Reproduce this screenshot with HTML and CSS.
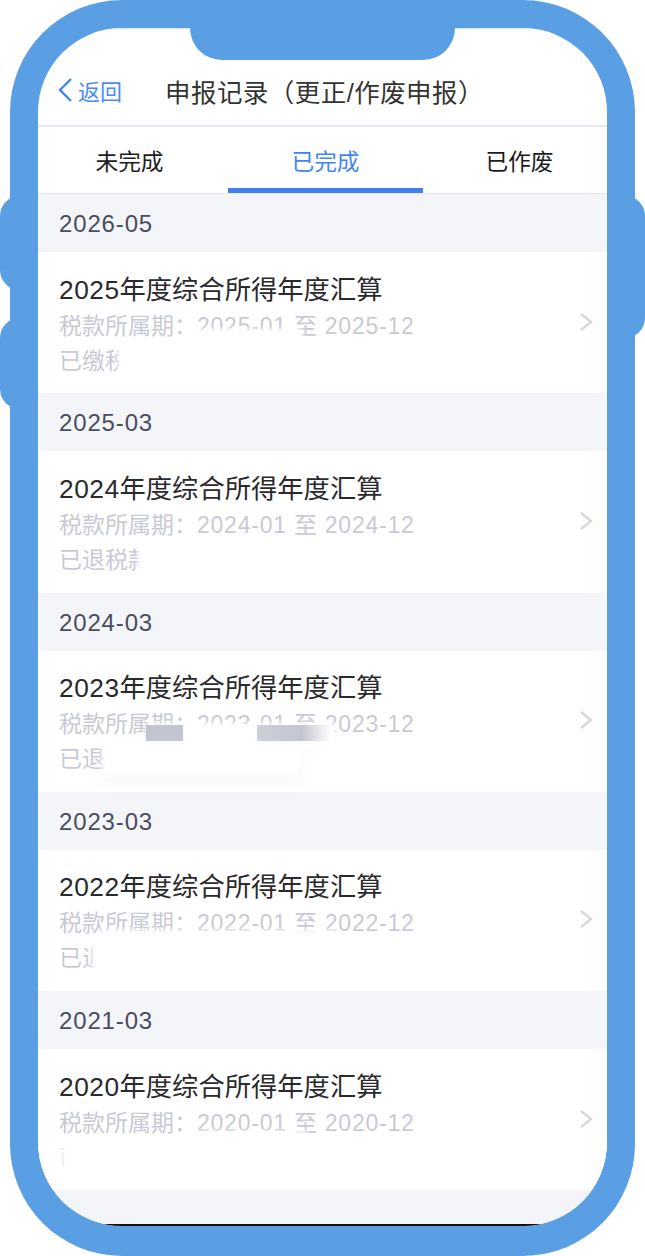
FILE: index.html
```html
<!DOCTYPE html>
<html lang="zh">
<head>
<meta charset="utf-8">
<title>申报记录</title>
<link rel="stylesheet" href="styles.css">
</head>
<body>
<div class="phone">
  <div class="btn btn-l1"></div>
  <div class="btn btn-l2"></div>
  <div class="btn btn-r"></div>
  <div class="frame">
    <div class="screen">
      <div class="notch"></div>
      <header class="nav">
        <div class="back">
          <svg class="back-ico" width="16" height="26" viewBox="0 0 16 26"><polyline points="14,2 3,13 14,24"/></svg>
          <span>返回</span>
        </div>
        <h1 class="title">申报记录（更正/作废申报）</h1>
      </header>
      <nav class="tabs">
        <div class="tab">未完成</div>
        <div class="tab active">已完成</div>
        <div class="tab last">已作废</div>
      </nav>

      <div class="month">2026-05</div>
      <div class="row">
        <div class="info">
          <div class="name"><span class="yr">2025</span>年度综合所得年度汇算</div>
          <div class="sub">税款所属期：<span class="range">2025-01 至 2025-12</span></div>
          <div class="state">已缴税款</div>
        </div>
        <svg class="chev" width="14" height="20" viewBox="0 0 14 20"><polyline points="2,2 12,10 2,18"/></svg>
        <div class="smudge s1a"></div>
        <div class="smudge s1b"></div>
      </div>

      <div class="month">2025-03</div>
      <div class="row">
        <div class="info">
          <div class="name"><span class="yr">2024</span>年度综合所得年度汇算</div>
          <div class="sub">税款所属期：<span class="range">2024-01 至 2024-12</span></div>
          <div class="state">已退税款</div>
        </div>
        <svg class="chev" width="14" height="20" viewBox="0 0 14 20"><polyline points="2,2 12,10 2,18"/></svg>
        <div class="smudge s2a"></div>
      </div>

      <div class="month">2024-03</div>
      <div class="row">
        <div class="info">
          <div class="name"><span class="yr">2023</span>年度综合所得年度汇算</div>
          <div class="sub">税款所属期：<span class="range">2023-01 至 2023-12</span></div>
          <div class="state">已退税款</div>
        </div>
        <svg class="chev" width="14" height="20" viewBox="0 0 14 20"><polyline points="2,2 12,10 2,18"/></svg>
        <div class="smudge s3a"></div>
        <div class="smudge s3b"></div>
        <div class="block b1"></div>
        <div class="block b2"></div>
      </div>

      <div class="month">2023-03</div>
      <div class="row">
        <div class="info">
          <div class="name"><span class="yr">2022</span>年度综合所得年度汇算</div>
          <div class="sub">税款所属期：<span class="range">2022-01 至 2022-12</span></div>
          <div class="state">已退税款</div>
        </div>
        <svg class="chev" width="14" height="20" viewBox="0 0 14 20"><polyline points="2,2 12,10 2,18"/></svg>
        <div class="smudge s4a"></div>
        <div class="smudge s4b"></div>
      </div>

      <div class="month">2021-03</div>
      <div class="row">
        <div class="info">
          <div class="name"><span class="yr">2020</span>年度综合所得年度汇算</div>
          <div class="sub">税款所属期：<span class="range">2020-01 至 2020-12</span></div>
          <div class="state">已退税款</div>
        </div>
        <svg class="chev" width="14" height="20" viewBox="0 0 14 20"><polyline points="2,2 12,10 2,18"/></svg>
        <div class="smudge s5a"></div>
        <div class="smudge s5b"></div>
      </div>

      <div class="foot"></div>
    </div>
  </div>
</div>
</body>
</html>
```
FILE: styles.css
```css
* { box-sizing: border-box; }
html, body { margin: 0; padding: 0; background: #fff; }
body { font-family: "Liberation Sans", "Noto Sans CJK SC", sans-serif; }

.phone { position: relative; width: 645px; height: 1256px; overflow: hidden; }
.btn { position: absolute; background: #5a9fe3; border-radius: 20px; width: 40px; }
.btn-l1 { left: 0; top: 196px; height: 94px; }
.btn-l2 { left: 0; top: 318px; height: 91px; }
.btn-r { right: 0; top: 196px; height: 142px; }

.frame {
  position: relative;
  margin-left: 10px;
  width: 625px;
  height: 1256px;
  padding: 28px 28px 30px;
  background: #5a9fe3;
  border-radius: 112px;
}
.screen {
  position: relative;
  width: 569px;
  height: 1198px;
  background: #fff;
  border-radius: 84px;
  overflow: hidden;
}
.notch {
  position: absolute;
  left: 152px;
  top: 0;
  width: 265px;
  height: 32px;
  background: #5a9fe3;
  border-radius: 0 0 42px 42px;
}

.nav {
  display: flex;
  align-items: center;
  height: 99px;
  padding: 26px 0 0 19px;
  border-top: 1px solid #d8e9f8;
  border-bottom: 2px solid #e6e7ee;
}
.back { display: flex; align-items: center; gap: 5px; width: 108px; color: #4a8df0; font-size: 22px; }
.back-ico { fill: none; stroke: #3f86f5; stroke-width: 2.4; }
.title { margin: 0; font-size: 25.5px; letter-spacing: .45px; font-weight: 400; color: #333; white-space: nowrap; }

.tabs {
  display: flex;
  height: 67px;
  margin-left: -6px;
  width: 586px;
  border-bottom: 1px solid #e6e7ee;
}
.tab {
  width: 195px;
  display: flex;
  align-items: center;
  justify-content: center;
  font-size: 22.7px;
  color: #1c1c1c;
}
.tab.active { color: #3f86f5; border-bottom: 5px solid #3f80ee; padding-top: 5px; margin-left: 1px; }
.tab.last { margin-left: -1px; }

.month {
  height: 58px;
  padding: 0 21px 0;
  background: #f4f5f9;
  color: #4a4d5e;
  font-size: 24px;
  letter-spacing: .85px;
  line-height: 59px;
}
.row {
  position: relative;
  display: flex;
  justify-content: space-between;
  align-items: center;
  height: 141.25px;
  padding: 0 14px 2px 21px;
  background: #fff;
}
.info { padding-top: 2px; }
.name { font-size: 26.3px; line-height: 36px; padding-top: 4px; color: #2a2a2e; white-space: nowrap; }
.yr { letter-spacing: .5px; }
.sub { font-size: 23px; line-height: 37px; color: #c8cad6; white-space: nowrap; }
.range { letter-spacing: .76px; }
.state { font-size: 23px; line-height: 33px; color: #c8cad6; white-space: nowrap; }
.chev { fill: none; stroke: #d5d7df; stroke-width: 2.4; }

.smudge { position: absolute; background: #fff; filter: blur(2px); }
.block { position: absolute; background: #c3c5d0; top: 74px; height: 16px; }
.b1 { left: 108px; width: 37px; }
.b2 { left: 219px; width: 74px; background: linear-gradient(90deg, #cdcfd9, #c3c5d0 60%, rgba(195,197,208,0)); }

.s1a { left: 155px; top: 77px; width: 110px; height: 16px; }
.s1b { left: 80px; top: 92px; width: 300px; height: 44px; }
.s2a { left: 100px; top: 92px; width: 300px; height: 44px; }
.s3a { left: 64px; top: 88px; width: 199px; height: 38px; filter: blur(3px); box-shadow: 0 5px 10px rgba(190,195,210,.2); }
.s3b { left: 108px; top: 72px; width: 190px; height: 22px; }
.s4a { left: 60px; top: 80px; width: 240px; height: 12px; }
.s4b { left: 54px; top: 92px; width: 300px; height: 44px; }
.s5a { left: 150px; top: 82px; width: 120px; height: 6px; }
.s5b { left: 24px; top: 92px; width: 300px; height: 44px; }

.foot { position: relative; height: 36px; background: #f4f5f9; }
.foot::after {
  content: "";
  position: absolute;
  left: 62px;
  right: 62px;
  bottom: 0;
  height: 2px;
  background: #111;
}
```
